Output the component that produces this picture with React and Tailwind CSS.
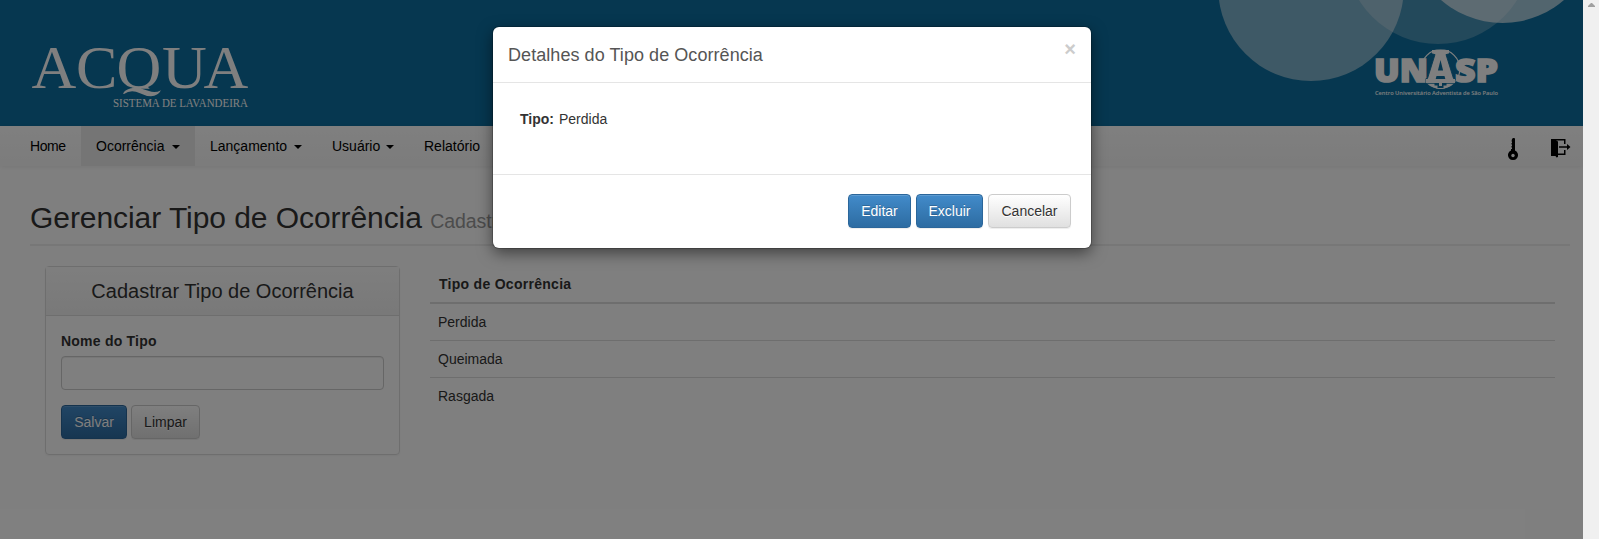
import React from "react";

const navItems = [
  { label: "Home", size: "w-[66px] tracking-[-0.4px]" },
  { label: "Ocorrência", menu: true, size: "w-[114px] bg-[#ebebeb]" },
  { label: "Lançamento", menu: true, size: "w-[122px]" },
  { label: "Usuário", menu: true, size: "w-[92px]" },
  { label: "Relatório", size: "w-[90px]" },
];

const rows = ["Perdida", "Queimada", "Rasgada"];

const btnBase =
  "h-[34px] rounded-[4px] border text-[14px] leading-5 shadow-[inset_0_1px_0_rgba(255,255,255,0.15),0_1px_1px_rgba(0,0,0,0.075)]";

function PrimaryButton({ children, width }) {
  return (
    <button
      className={`${btnBase} ${width} border-[#2b669a] bg-linear-to-b from-[#428bca] to-[#2d6ca2] text-white [text-shadow:0_-1px_0_rgba(0,0,0,0.2)]`}
    >
      {children}
    </button>
  );
}

function DefaultButton({ children, width }) {
  return (
    <button
      className={`${btnBase} ${width} border-[#ccc] bg-linear-to-b from-white to-[#e0e0e0] text-[#333] [text-shadow:0_1px_0_#fff]`}
    >
      {children}
    </button>
  );
}

function AcquaLogo() {
  return (
    <svg
      className="overflow-visible"
      width="230"
      height="80"
      viewBox="0 0 230 80"
      fill="#fff"
      fontFamily="'Liberation Serif', serif"
    >
      <clipPath id="logo-caps">
        <path d="M0 0h230v48.800H0z" />
      </clipPath>
      <text x="1.500 46 86.500 132 173.500" y="47.700" fontSize="62" clipPath="url(#logo-caps)">
        ACQUA
      </text>
      <path d="M93 53.500q3-5.500 12-5.500 8 .5 14 3 6 2.500 12-.8-3 5.500-10 6-5 0-11-3-9-4.500-16 .8z" />
      <path d="M102 47.500h11l-4 3h-6z" />
      <text x="83" y="66.500" fontSize="12" textLength="135" lengthAdjust="spacingAndGlyphs">
        SISTEMA DE LAVANDEIRA
      </text>
    </svg>
  );
}

function HeaderArt() {
  return (
    <svg width="383" height="126" viewBox="1200 0 383 126" fill="#fff">
      <circle cx="1311" cy="-11.700" r="92.700" opacity="0.465" />
      <circle cx="1438" cy="-49" r="93" opacity="0.245" />
      <circle cx="1502.500" cy="-70.700" r="93.700" opacity="0.63" />
      <g fontFamily="'Open Sans', sans-serif" fontWeight="800" stroke="#fff" strokeWidth="1.600">
        <text x="1374" y="81.500" fontSize="32.500" textLength="54" lengthAdjust="spacingAndGlyphs">UN</text>
        <text x="1455" y="81.500" fontSize="32.500" textLength="43" lengthAdjust="spacingAndGlyphs">SP</text>
      </g>
      <circle cx="1440.500" cy="69" r="19.300" fill="none" stroke="#fff" strokeWidth="1.200" />
      <path d="M1427 82.500q5.500 6.500 13.500 6.500t13.500-6.500z" />
      <path
        d="M1433 50h15v4.500h-2l7.500 24h1.500v4.800h-29v-4.800h1.500l7.500-24h-2z"
        stroke="#0d6fa0"
        strokeWidth="0.900"
      />
      <path d="M1432 50h17v3.500h-17z" />
      <path d="M1440.500 60l2.600 10.500h-5.200zM1436.500 76h8l.8 3h-9.600z" fill="#0d6fa0" />
      <path d="M1426 79h29v4h-29z" />
      <path d="M1434.500 83h12v2.500h-3V88h-6v-2.500h-3z" fill="#0d6fa0" />
      <path d="M1439 82h3v4h-3z" />
      <text
        x="1375"
        y="94.800"
        fontSize="5.200"
        fontWeight="600"
        fontFamily="'Open Sans', sans-serif"
        textLength="123"
        lengthAdjust="spacingAndGlyphs"
      >
        Centro Universitário Adventista de São Paulo
      </text>
    </svg>
  );
}

function KeyIcon() {
  return (
    <svg width="12" height="24" viewBox="0 0 12 24" fill="#000">
      <path d="M4 1l1-1h1.500l.5 1v11.500a5 5 0 1 1-4 0V11h1V9.500h-.5V8H4V6.500h-.5V5H4V3.500h-.5z" />
      <circle cx="5" cy="17.500" r="1.700" fill="#fff" />
    </svg>
  );
}

function ExitIcon() {
  return (
    <svg width="20" height="20" viewBox="0 0 20 20" fill="#000">
      <path d="M0 1h14.500v5H13V2.500H5l2 1V19l-1.500.500L4.500 18H0z" />
      <path d="M7 15.500h6V12h1.500v5H7zM8 8.300h8V6l3.500 3-3.500 3V9.800H8z" />
    </svg>
  );
}

function Modal() {
  return (
    <div className="absolute top-[27px] left-[493px] w-[598px] rounded-[6px] bg-white shadow-[0_5px_15px_rgba(0,0,0,0.5),0_0_0_1px_rgba(0,0,0,0.2)]">
      <div className="flex h-[56px] justify-between border-b border-[#e5e5e5] px-[15px]">
        <h4 className="pt-[15px] text-[18px] leading-[26px] tracking-[0.06px] text-[#555]">
          Detalhes do Tipo de Ocorrência
        </h4>
        <button className="h-[21px] pt-3 text-[20px] leading-[20px] font-bold text-[#ccc]">×</button>
      </div>
      <div className="flex h-[92px] gap-[5px] border-b border-[#e5e5e5] px-[27px] pt-[26px] text-[14px] leading-5">
        <b>Tipo:</b>
        <span>Perdida</span>
      </div>
      <div className="flex h-[73px] items-start justify-end pt-[19px] pr-5">
        <PrimaryButton width="mr-[5px] w-[63px]">Editar</PrimaryButton>
        <PrimaryButton width="mr-[5px] w-[67px]">Excluir</PrimaryButton>
        <DefaultButton width="w-[83px]">Cancelar</DefaultButton>
      </div>
    </div>
  );
}

export default function App() {
  return (
    <div className="relative flex h-[539px] w-[1599px] overflow-hidden bg-white font-['Liberation_Sans',Arial,sans-serif] text-[14px] leading-5 text-[#333]">
      <div className="w-[1583px]">
        <header className="flex h-[126px] justify-between bg-[#0d6fa0]">
          <div className="pt-10 pl-[30px]">
            <AcquaLogo />
          </div>
          <HeaderArt />
        </header>
        <nav className="flex h-10 justify-between bg-linear-to-b from-white to-[#f8f8f8] pr-[12px] pl-[15px] text-black shadow-[0_1px_5px_rgba(0,0,0,0.075)]">
          <ul className="flex">
            {navItems.map((item) => (
              <li key={item.label} className={`flex items-center justify-between px-[15px] ${item.size}`}>
                {item.label}
                {item.menu && <span className="mt-[2px] border-x-4 border-t-4 border-x-transparent border-t-black" />}
              </li>
            ))}
          </ul>
          <div className="flex gap-[31px] pt-3">
            <KeyIcon />
            <ExitIcon />
          </div>
        </nav>
        <main className="pr-[13px] pl-[30px]">
          <h1 className="h-[80px] border-b-2 border-[#eee] pt-[35px] text-[30px] leading-[33px] tracking-[-0.06px]">
            Gerenciar Tipo de Ocorrência <small className="text-[19.500px] text-[#999]">Cadastrar</small>
          </h1>
          <div className="flex gap-[30px] px-[15px] pt-5">
            <section className="h-[189px] w-[355px] shrink-0 rounded-[4px] border border-[#ddd] shadow-[0_1px_2px_rgba(0,0,0,0.05)]">
              <h2 className="h-[49px] border-b border-[#ddd] bg-linear-to-b from-[#fdfdfd] to-[#f2f2f2] pt-3 text-center text-[20px] leading-6">
                Cadastrar Tipo de Ocorrência
              </h2>
              <div className="px-[15px] pt-[15px]">
                <label className="block pb-[5px] font-bold tracking-[0.22px]">Nome do Tipo</label>
                <input className="block h-[34px] w-full rounded-[4px] border border-[#ccc] shadow-[inset_0_1px_1px_rgba(0,0,0,0.075)]" />
                <div className="flex gap-1 pt-[15px]">
                  <PrimaryButton width="w-[66px]">Salvar</PrimaryButton>
                  <DefaultButton width="w-[69px]">Limpar</DefaultButton>
                </div>
              </div>
            </section>
            <table className="w-[1125px] self-start text-left">
              <thead>
                <tr className="h-[37px] border-b-2 border-[#ddd]">
                  <th className="px-[9px] tracking-[0.28px]">Tipo de Ocorrência</th>
                </tr>
              </thead>
              <tbody>
                {rows.map((row) => (
                  <tr key={row} className="h-[37px] border-b border-[#ddd] last:border-0">
                    <td className="px-2">{row}</td>
                  </tr>
                ))}
              </tbody>
            </table>
          </div>
        </main>
      </div>
      <div className="w-4 bg-[#f0f0f0] pt-[3px] pl-[5px]">
        <svg width="7" height="4" viewBox="0 0 7 4" fill="#a0a0a0">
          <path d="M3 0h1l3 3v1H0V3z" />
        </svg>
      </div>
      <div className="absolute top-0 left-0 h-[539px] w-[1583px] bg-black/50" />
      <Modal />
    </div>
  );
}
